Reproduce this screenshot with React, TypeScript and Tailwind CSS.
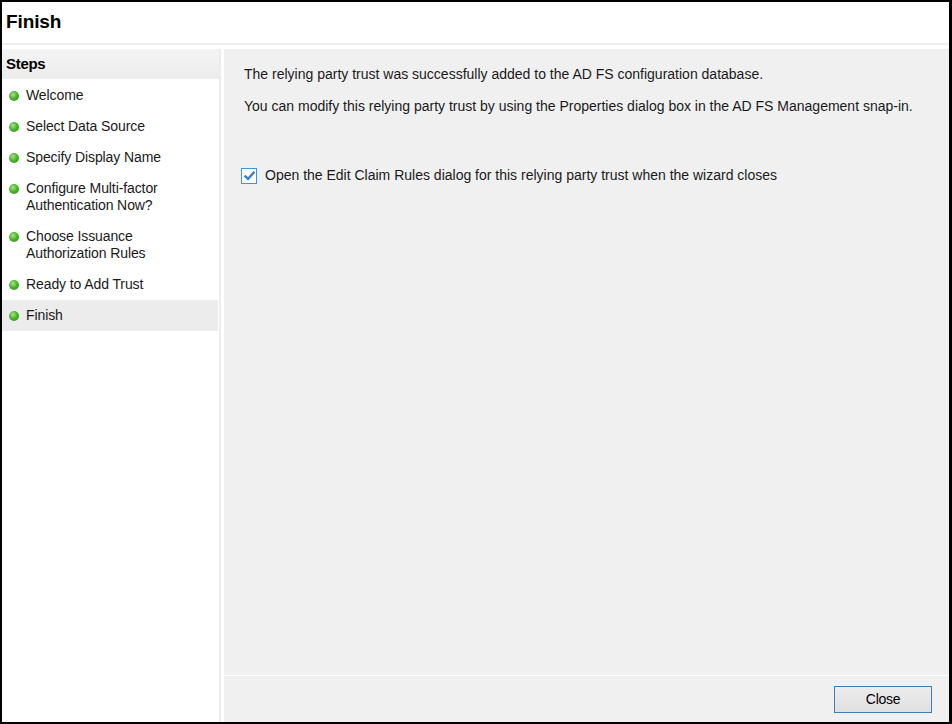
import React from 'react';

const steps = [
  ['Welcome'],
  ['Select Data Source'],
  ['Specify Display Name'],
  ['Configure Multi-factor', 'Authentication Now?'],
  ['Choose Issuance', 'Authorization Rules'],
  ['Ready to Add Trust'],
  ['Finish'],
];

function Bullet() {
  return (
    <span className="mt-[4px] w-[10px] h-[10px] shrink-0 rounded-full bg-[radial-gradient(circle_at_40%_35%,#a6e58a_0%,#4cb52c_45%,#2f8a17_100%)]" />
  );
}

export default function App() {
  return (
    <div
      className="w-[952px] h-[724px] bg-black pt-[2px] pl-[2px] pr-[3px] pb-[2px] text-[#1a1a1a]"
      style={{ fontFamily: '"Liberation Sans", Arial, sans-serif' }}
    >
      <div className="w-full h-full bg-white flex flex-col">
        {/* Title */}
        <div className="h-[41px] flex items-center px-[4px] shrink-0">
          <h1 className="text-[19px] font-bold tracking-[-0.1px] text-black">Finish</h1>
        </div>
        <div className="h-[2px] bg-[#eeeeee] shrink-0" />
        <div className="h-[4px] shrink-0" />

        <div className="flex-1 flex min-h-0">
          {/* Steps panel */}
          <div className="w-[219px] shrink-0 border-r-2 border-[#ececec] flex flex-col">
            <div className="h-[30px] flex items-center pl-[4px] bg-gradient-to-b from-[#f4f4f4] to-[#ececec]">
              <span className="text-[15px] font-bold tracking-[-0.3px] text-black">Steps</span>
            </div>
            <ul className="pt-[1px] pr-[1px]">
              {steps.map((lines, i) => (
                <li
                  key={i}
                  className={`flex gap-[7px] pl-[7px] py-[7px] text-[14px] leading-[17px] tracking-[-0.1px] ${
                    i === steps.length - 1 ? 'bg-[#ececec]' : ''
                  }`}
                >
                  <Bullet />
                  <div>
                    {lines.map((l) => (
                      <div key={l}>{l}</div>
                    ))}
                  </div>
                </li>
              ))}
            </ul>
          </div>

          <div className="w-[3px] shrink-0" />

          {/* Content panel */}
          <div className="flex-1 bg-[#f0f0f0] flex flex-col">
            <div className="flex-1 pl-[20px] pt-[17px] text-[14px] leading-[17px]">
              <p>The relying party trust was successfully added to the AD FS configuration database.</p>
              <p className="mt-[15px]">
                You can modify this relying party trust by using the Properties dialog box in the AD FS Management snap-in.
              </p>
              <label className="mt-[52px] flex items-center gap-[8px] -ml-[3px]">
                <span className="w-[16px] h-[16px] border border-[#3a96dd] bg-white flex items-center justify-center">
                  <svg width="13" height="13" viewBox="0 0 13 13">
                    <path d="M1.6 6.6 L5 9.9 L11.4 2.8" fill="none" stroke="#2a7fd4" strokeWidth="2.3" />
                  </svg>
                </span>
                <span>Open the Edit Claim Rules dialog for this relying party trust when the wizard closes</span>
              </label>
            </div>
            <div className="h-[1px] bg-white" />
            <div className="h-[46px] flex justify-end items-start pt-[10px] pr-[17px]">
              <button className="w-[98px] h-[27px] border border-[#3c7fb1] bg-gradient-to-b from-[#ececec] to-[#e0e0e0] text-[14px] tracking-[-0.3px] text-black">
                Close
              </button>
            </div>
          </div>
        </div>
      </div>
    </div>
  );
}
